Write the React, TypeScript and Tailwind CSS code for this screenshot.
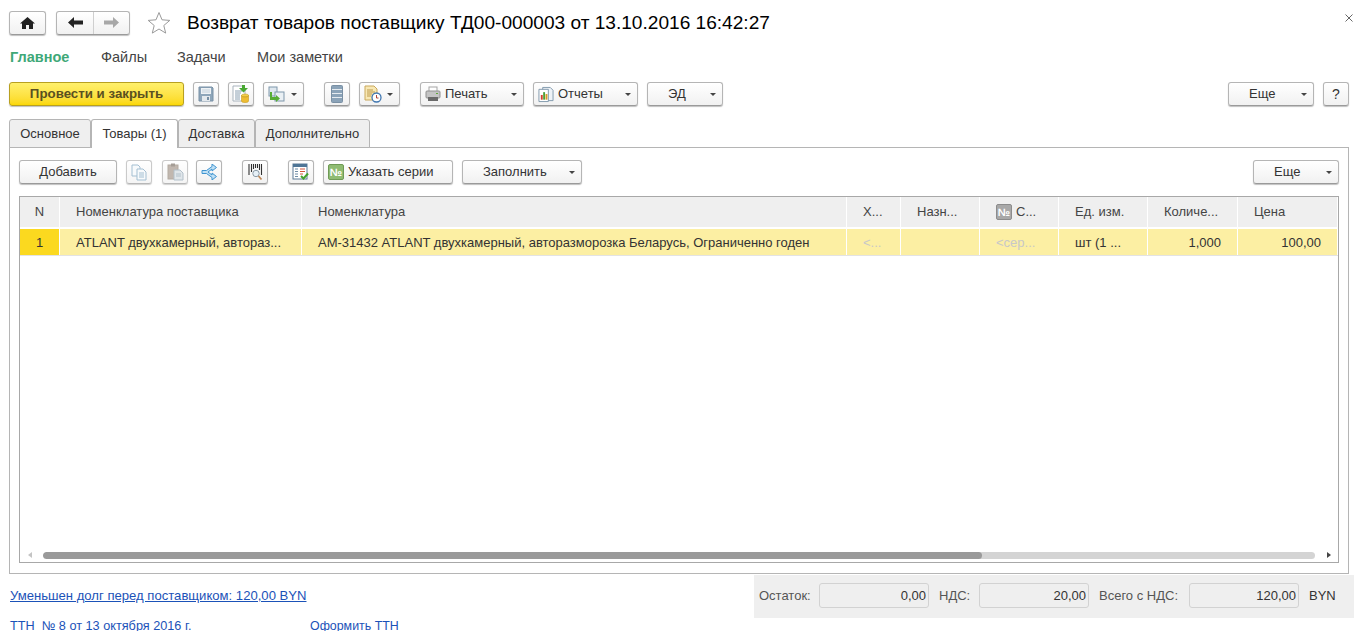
import type { ReactNode } from "react";

const btn =
  "flex h-[24px] shrink-0 items-center rounded-[3px] border border-[#b5b5b5] border-b-[#9a9a9a] bg-gradient-to-b from-white to-[#f1f1f1] shadow-[0_1px_1px_rgba(0,0,0,0.25)]";

function Caret() {
  return <span className="h-0 w-0 border-x-[3px] border-t-[3px] border-x-transparent border-t-[#444]" />;
}

function IconBtn({ children, caret, dim }: { children: ReactNode; caret?: boolean; dim?: boolean }) {
  return (
    <div className={`${btn} ${caret ? "w-[41px] pl-[4px]" : "w-[26px] justify-center"} ${dim ? "opacity-70" : ""}`}>
      {children}
      {caret && <span className="ml-auto mr-[6px] flex"><Caret /></span>}
    </div>
  );
}

function TextBtn({ label, w, icon }: { label: string; w: string; icon?: ReactNode }) {
  return (
    <div className={`${btn} ${w} pr-[6px]`}>
      {icon ? <span className="ml-[4px] mr-[4px] flex">{icon}</span> : null}
      <span className={`flex-1 ${icon ? "" : "pl-[20px]"}`}>{label}</span>
      <Caret />
    </div>
  );
}

function SaveIcon() {
  return (
    <svg width="16" height="16" viewBox="0 0 16 16">
      <path d="M1 1h13l1 1v13H1z" fill="#8ea6ba" stroke="#7890a5" />
      <rect x="3" y="2" width="10" height="6" fill="#eef2f5" />
      <path d="M4 4h8M4 6h8" stroke="#c5d2dc" />
      <rect x="4" y="10" width="8" height="5" fill="#e4e9ed" />
      <rect x="9" y="11" width="2" height="3" fill="#7890a5" />
    </svg>
  );
}

function PostDbIcon() {
  return (
    <svg width="18" height="18" viewBox="0 0 18 18">
      <path d="M1 1h9l3 3v12H1z" fill="#fff" stroke="#a9b4bd" />
      <path d="M3 6h7M3 8h6M3 10h5M3 12h5M3 14h5" stroke="#8aa0b2" />
      <path d="M10 0h3v3h3l-4.500 4.500L7 3h3z" fill="#48a832" />
      <ellipse cx="13" cy="10.500" rx="3.500" ry="1.500" fill="#f3cf4a" stroke="#c69a20" strokeWidth=".6" />
      <path d="M9.500 10.500v5.500c0 1 1.500 1.500 3.500 1.500s3.500-.5 3.500-1.500v-5.500c0 1-1.500 1.500-3.500 1.500s-3.500-.5-3.500-1.500z" fill="#eebd33" stroke="#c69a20" strokeWidth=".6" />
    </svg>
  );
}

function SwitchIcon() {
  return (
    <svg width="17" height="16" viewBox="0 0 17 16">
      <rect x="1" y="1" width="8" height="9" fill="#dfe8ef" stroke="#7f97ab" />
      <rect x="7" y="6" width="9" height="9" fill="#eaf0f4" stroke="#7f97ab" />
      <path d="M4 6v5h4V9l4 3.500L8 16v-2H2V6z" fill="#58ad36" />
    </svg>
  );
}

function ListIcon() {
  return (
    <svg width="12" height="18" viewBox="0 0 12 18">
      <rect x=".5" y=".5" width="11" height="17" rx="1" fill="#8ba3b8" stroke="#7a90a4" />
      <path d="M1 4.500h10M1 8.500h10M1 12.500h10" stroke="#e5ebf0" />
    </svg>
  );
}

function ReportClockIcon() {
  return (
    <svg width="18" height="18" viewBox="0 0 18 18">
      <path d="M1 1h9l3 3v11H1z" fill="#f8e8b4" stroke="#c9a85c" />
      <path d="M3 5h6M3 7h8M3 9h5M3 11h4" stroke="#bd9a4d" />
      <circle cx="12.500" cy="12.500" r="4.500" fill="#fff" stroke="#3f76b0" strokeWidth="1.300" />
      <path d="M12.500 10v3h2" fill="none" stroke="#b0463a" />
    </svg>
  );
}

function PrinterIcon() {
  return (
    <svg width="16" height="16" viewBox="0 0 16 16">
      <rect x="4" y="1" width="8" height="5" fill="#fff" stroke="#a5a5a5" />
      <rect x="1" y="5" width="14" height="7" rx="1" fill="#c4c4c4" stroke="#909090" />
      <rect x="3" y="11" width="10" height="4" fill="#6a6a6a" />
      <rect x="11" y="7" width="2" height="1" fill="#5fa83a" />
    </svg>
  );
}

function ReportsIcon() {
  return (
    <svg width="16" height="17" viewBox="0 0 17 17">
      <path d="M5 1h8l3 3v11H5z" fill="#eef3f7" stroke="#7f97ab" />
      <path d="M1 3h10v13H1z" fill="#fff" stroke="#7f97ab" />
      <rect x="3" y="9" width="2" height="5" fill="#d2402f" />
      <rect x="5.500" y="6" width="2" height="8" fill="#4ca038" />
      <rect x="8" y="8" width="2" height="6" fill="#d89a26" />
    </svg>
  );
}

function CopyIcon() {
  return (
    <svg width="16" height="17" viewBox="0 0 16 17">
      <path d="M1 1h6l2 2v9H1z" fill="#f4f8fb" stroke="#7fa5c0" />
      <path d="M6 5h6l3 3v8H6z" fill="#f4f8fb" stroke="#7fa5c0" />
      <path d="M8 9h5M8 11h5M8 13h5" stroke="#7fa5c0" />
    </svg>
  );
}

function PasteIcon() {
  return (
    <svg width="17" height="18" viewBox="0 0 17 18">
      <rect x="1" y="2" width="10" height="14" fill="#a89a8e" stroke="#94877b" />
      <rect x="4" y="0.500" width="4" height="3" fill="#7f756b" />
      <path d="M7 7h6l3 3v7H7z" fill="#d3dce2" stroke="#93a6b4" />
      <path d="M9 11h5M9 13h5" stroke="#93a6b4" />
    </svg>
  );
}

function BranchIcon() {
  return (
    <svg width="16" height="16" viewBox="0 0 16 16">
      <path d="M11 0l4.500 3.500L11 7V5L7 8l4 3V9l4.500 3.500L11 16v-2.500L5.500 9.500H1v-3h4.500L11 2.500z" fill="#bfe0f5" stroke="#3f94d0" strokeLinejoin="round" />
    </svg>
  );
}

function BarcodeIcon() {
  return (
    <svg width="15" height="17" viewBox="0 0 15 17">
      <path d="M1 0v11M3.500 0v8M5.500 0v5M7.500 0v4M9.500 0v4M11.500 0v6M13.500 0v11" stroke="#333" strokeWidth="1.100" />
      <circle cx="8" cy="9.500" r="3.200" fill="#e6f0f7" stroke="#8a9aa6" />
      <path d="M10.500 12l3 3.500" stroke="#c08a5a" strokeWidth="1.800" />
    </svg>
  );
}

function TableCheckIcon() {
  return (
    <svg width="18" height="18" viewBox="0 0 18 18">
      <rect x="1" y="1" width="14" height="15" fill="#fff" stroke="#5d7b97" />
      <rect x="1" y="1" width="14" height="3" fill="#4f7596" />
      <path d="M3 6h3M3 8.500h3M3 11h3M3 13.500h3" stroke="#6f8ca6" />
      <path d="M8 6h5M8 8.500h5M8 11h3" stroke="#d4553c" />
      <path d="M9 13l2.500 2.500L16 10.500" fill="none" stroke="#43a22d" strokeWidth="2" />
    </svg>
  );
}

function NumberBadge({ gray }: { gray?: boolean }) {
  return (
    <span
      className={`flex h-[16px] w-[16px] items-center justify-center rounded-[2px] border text-[11px] font-bold ${
        gray ? "border-[#8c8c8c] bg-[#a8a8a8] text-white" : "border-[#6f9a55] bg-[#8fbc72] text-white"
      }`}
    >
      №
    </span>
  );
}

type Col = {
  w: string;
  head: string;
  cell: string;
  headClass?: string;
  cellClass?: string;
  badge?: boolean;
};

const cols: Col[] = [
  { w: "w-[40px]", head: "N", cell: "1", headClass: "justify-center", cellClass: "justify-center bg-[#fbd91f]" },
  { w: "w-[242px]", head: "Номенклатура поставщика", cell: "ATLANT двухкамерный, автораз...", headClass: "pl-[16px]", cellClass: "pl-[16px] bg-[#fcefa3]" },
  { w: "w-[545px]", head: "Номенклатура", cell: "АМ-31432 ATLANT двухкамерный, авторазморозка Беларусь, Ограниченно годен", headClass: "pl-[16px]", cellClass: "pl-[16px] bg-[#fcefa3]" },
  { w: "w-[54px]", head: "Х...", cell: "<...", headClass: "pl-[16px]", cellClass: "pl-[16px] bg-[#fcefa3] text-[#c8c8c8]" },
  { w: "w-[79px]", head: "Назн...", cell: "", headClass: "pl-[16px]", cellClass: "pl-[16px] bg-[#fcefa3]" },
  { w: "w-[79px]", head: "С...", cell: "<сер...", headClass: "pl-[16px]", cellClass: "pl-[16px] bg-[#fcefa3] text-[#c8c8c8]", badge: true },
  { w: "w-[89px]", head: "Ед. изм.", cell: "шт (1 ...", headClass: "pl-[16px]", cellClass: "pl-[16px] bg-[#fcefa3]" },
  { w: "w-[90px]", head: "Количе...", cell: "1,000", headClass: "pl-[16px]", cellClass: "justify-end pr-[16px] bg-[#fcefa3]" },
  { w: "w-[100px]", head: "Цена", cell: "100,00", headClass: "pl-[16px]", cellClass: "justify-end pr-[16px] bg-[#fcefa3]" },
];

function SumField({ value }: { value: string }) {
  return (
    <div className="flex h-[25px] w-[110px] items-center justify-end rounded-[3px] border border-[#d2d2d2] pr-[2px] text-[#333]">
      {value}
    </div>
  );
}

export default function App() {
  return (
    <div className="flex h-[631px] w-[1362px] flex-col overflow-hidden bg-white pl-[9px] font-['Liberation_Sans',Arial,sans-serif] text-[13px] text-[#333]">
      {/* title */}
      <div className="mt-[10px] flex h-[25px] shrink-0 items-center">
        <div className={`${btn} w-[37px] justify-center`}>
          <svg width="15" height="14" viewBox="0 0 15 14">
            <path d="M7.500 1L0 7.500h2V13h4V9h3v4h4V7.500h2z" fill="#222" />
          </svg>
        </div>
        <div className={`${btn} ml-[10px] w-[74px]`}>
          <div className="flex h-full w-[37px] items-center justify-center border-r border-[#cfcfcf]">
            <svg width="15" height="11" viewBox="0 0 15 11">
              <path d="M0 5.500L6 0v3.500h9v4H6V11z" fill="#222" />
            </svg>
          </div>
          <div className="flex flex-1 items-center justify-center">
            <svg width="15" height="11" viewBox="0 0 15 11">
              <path d="M15 5.500L9 0v3.500H0v4h9V11z" fill="#a8a8a8" />
            </svg>
          </div>
        </div>
        <svg className="ml-[17px]" width="24" height="23" viewBox="0 0 24 23">
          <path d="M12 1.500l3 7.300 7.800.6-6 5.100 1.900 7.600L12 18l-6.700 4.100 1.900-7.600-6-5.100 7.800-.6z" fill="#fff" stroke="#9a9a9a" />
        </svg>
        <h1 className="ml-[16px] text-[19.100px] leading-none text-black">
          Возврат товаров поставщику ТД00-000003 от 13.10.2016 16:42:27
        </h1>
        <svg className="ml-auto mr-[9px] -translate-y-[5px]" width="8" height="8" viewBox="0 0 8 8">
          <path d="M.5.500l7 7M7.500.500l-7 7" stroke="#666" />
        </svg>
      </div>

      {/* sections */}
      <nav className="mt-[13px] flex h-[20px] shrink-0 items-center pl-[1px] text-[14.500px] text-[#444]">
        <span className="w-[91px] font-bold text-[#3fa878]">Главное</span>
        <span className="w-[76px]">Файлы</span>
        <span className="w-[80px]">Задачи</span>
        <span>Мои заметки</span>
      </nav>

      {/* command bar */}
      <div className="mt-[14px] flex h-[25px] shrink-0 items-start pr-[13px]">
        <div className="flex h-[24px] w-[175px] items-center justify-center rounded-[3px] border border-[#b8a020] bg-gradient-to-b from-[#fff06a] to-[#fbd800] text-[13.300px] font-bold text-[#5a5020] shadow-[0_1px_1px_rgba(0,0,0,0.25)]">
          Провести и закрыть
        </div>
        <div className="ml-[9px] flex items-center gap-[9px]">
          <IconBtn><SaveIcon /></IconBtn>
          <IconBtn><PostDbIcon /></IconBtn>
          <IconBtn caret><SwitchIcon /></IconBtn>
          <span className="ml-[11px] flex gap-[9px]">
            <IconBtn><ListIcon /></IconBtn>
            <IconBtn caret><ReportClockIcon /></IconBtn>
          </span>
          <span className="ml-[11px] flex gap-[9px]">
            <TextBtn label="Печать" w="w-[104px]" icon={<PrinterIcon />} />
            <TextBtn label="Отчеты" w="w-[105px]" icon={<ReportsIcon />} />
            <TextBtn label="ЭД" w="w-[76px]" />
          </span>
        </div>
        <div className="ml-auto flex gap-[9px]">
          <TextBtn label="Еще" w="w-[86px]" />
          <div className={`${btn} w-[26px] justify-center text-[14px]`}>?</div>
        </div>
      </div>

      {/* tabs */}
      <div className="relative z-10 mt-[12px] flex h-[29px] shrink-0">
        <div className="flex w-[82px] items-center justify-center rounded-t-[3px] border border-[#b5b5b5] bg-[#efefef]">Основное</div>
        <div className="flex w-[87px] items-center justify-center rounded-t-[3px] border border-b-0 border-[#b5b5b5] bg-white">Товары (1)</div>
        <div className="flex w-[77px] items-center justify-center rounded-t-[3px] border border-[#b5b5b5] bg-[#efefef]">Доставка</div>
        <div className="flex w-[115px] items-center justify-center rounded-t-[3px] border border-[#b5b5b5] bg-[#efefef]">Дополнительно</div>
      </div>

      {/* tab page */}
      <div className="-mt-px flex h-[427px] w-[1340px] shrink-0 flex-col border border-[#b5b5b5] px-[9px] pb-[10px] pt-[12px]">
        <div className="flex h-[24px] shrink-0 items-center">
          <div className={`${btn} w-[98px] justify-center`}>Добавить</div>
          <div className="ml-[9px]"><IconBtn dim><CopyIcon /></IconBtn></div>
          <div className="ml-[10px]"><IconBtn dim><PasteIcon /></IconBtn></div>
          <div className="ml-[8px]"><IconBtn><BranchIcon /></IconBtn></div>
          <div className="ml-[20px]"><IconBtn><BarcodeIcon /></IconBtn></div>
          <div className="ml-[20px]"><IconBtn><TableCheckIcon /></IconBtn></div>
          <div className={`${btn} ml-[9px] w-[130px] pl-[4px]`}>
            <NumberBadge />
            <span className="ml-[4px]">Указать серии</span>
          </div>
          <div className="ml-[9px]"><TextBtn label="Заполнить" w="w-[120px]" /></div>
          <div className="ml-auto"><TextBtn label="Еще" w="w-[86px]" /></div>
        </div>

        {/* table */}
        <div className="mt-[12px] flex min-h-0 flex-1 flex-col border border-[#a8a8a8]">
          <div className="flex h-[32px] shrink-0 border-b-[2px] border-white">
            {cols.map((c) => (
              <div
                key={c.head}
                className={`${c.w} flex shrink-0 items-center border-r border-white bg-[#efefef] text-[#444] last:flex-1 ${c.headClass ?? ""}`}
              >
                {c.badge && <span className="mr-[4px] flex"><NumberBadge gray /></span>}
                {c.head}
              </div>
            ))}
          </div>
          <div className="flex h-[27px] shrink-0 border-b border-[#e3e3e3]">
            {cols.map((c) => (
              <div
                key={c.head}
                className={`${c.w} flex shrink-0 items-center whitespace-nowrap border-r border-white pt-px last:flex-1 ${c.cellClass ?? ""}`}
              >
                {c.cell}
              </div>
            ))}
          </div>
          <div className="flex-1" />
          <div className="mb-[3px] flex h-[8px] shrink-0 items-center pl-[8px] pr-[7px]">
            <span className="h-0 w-0 border-y-[3px] border-r-[4px] border-y-transparent border-r-[#c4c4c4]" />
            <div className="ml-[11px] flex h-[7px] flex-1 overflow-hidden rounded-[4px] bg-[#d4d4d4]">
              <div className="w-[939px] rounded-[4px] bg-[#9a9a9a]" />
            </div>
            <span className="ml-[12px] h-0 w-0 border-y-[3px] border-l-[4px] border-y-transparent border-l-[#444]" />
          </div>
        </div>
      </div>

      {/* footer */}
      <div className="mt-px flex shrink-0">
        <div className="flex flex-1 flex-col pl-[1px] pt-[13px]">
          <a className="text-[13.100px] leading-[16px] text-[#1b52b8] underline">Уменьшен долг перед поставщиком: 120,00 BYN</a>
          <div className="mt-[14px] flex leading-[16px] text-[#1b52b8]">
            <span className="w-[300px] whitespace-pre text-[12.700px]">ТТН  № 8 от 13 октября 2016 г.</span>
            <span className="text-[12.400px]">Оформить ТТН</span>
          </div>
        </div>
        <div className="mr-[8px] flex h-[43px] w-[600px] items-center bg-[#efefef] pb-[2px] pl-[5px]">
          <span className="w-[60px] text-[#555]">Остаток:</span>
          <SumField value="0,00" />
          <span className="ml-[10px] w-[40px] text-[#555]">НДС:</span>
          <SumField value="20,00" />
          <span className="ml-[10px] w-[90px] text-[#555]">Всего с НДС:</span>
          <SumField value="120,00" />
          <span className="ml-[10px]">BYN</span>
        </div>
      </div>
    </div>
  );
}
